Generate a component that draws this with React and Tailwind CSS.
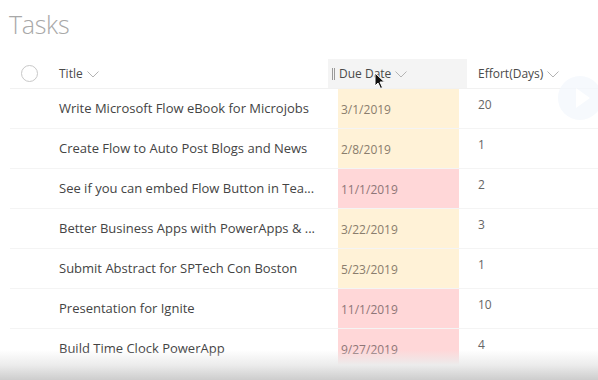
import React from 'react';

const tasks = [
  { title: 'Write Microsoft Flow eBook for Microjobs', due: '3/1/2019', effort: '20', late: false },
  { title: 'Create Flow to Auto Post Blogs and News', due: '2/8/2019', effort: '1', late: false },
  { title: 'See if you can embed Flow Button in Tea...', due: '11/1/2019', effort: '2', late: true },
  { title: 'Better Business Apps with PowerApps & ...', due: '3/22/2019', effort: '3', late: false },
  { title: 'Submit Abstract for SPTech Con Boston', due: '5/23/2019', effort: '1', late: false },
  { title: 'Presentation for Ignite', due: '11/1/2019', effort: '10', late: true },
  { title: 'Build Time Clock PowerApp', due: '9/27/2019', effort: '4', late: true },
];

function Chevron() {
  return (
    <svg width="12" height="7" viewBox="0 0 12 7" className="ml-[4px] mt-[1px]">
      <path d="M0.5 0.5 L6 6 L11.5 0.5" fill="none" stroke="#b4b4b4" strokeWidth="1" />
    </svg>
  );
}

export default function App() {
  return (
    <div
      className="relative w-[598px] h-[380px] overflow-hidden bg-white"
      style={{ fontFamily: '"Open Sans", "Noto Sans", sans-serif' }}
    >
      <h1 className="pl-[9px] pt-[8px] h-[59px] text-[25px] font-light text-[#a8a8a8] leading-[32px] tracking-[-0.3px]">
        Tasks
      </h1>

      <div className="flex h-[30px] items-center border-b border-[#f1f1f1] ml-[10px] text-[12px] text-[#4a4a4a]">
        <div className="w-[49px] flex items-center pl-[11px]">
          <div className="w-[17px] h-[17px] rounded-full border border-[#c8c8c8]" />
        </div>
        <div className="w-[269px] flex items-center">
          Title
          <Chevron />
        </div>
        <div className="w-[139px] h-full bg-[#f4f4f4] flex items-center pl-[4px]">
          <div className="w-[3px] h-[12px] border-l border-r border-[#9a9a9a] mr-[4px]" />
          Due Date
          <Chevron />
        </div>
        <div className="flex items-center pl-[11px]">
          Effort(Days)
          <Chevron />
        </div>
      </div>

      {tasks.map((t) => (
        <div key={t.title} className="flex h-[40px] border-b border-[#f4f4f4] ml-[10px] text-[13px]">
          <div className="w-[49px]" />
          <div className="w-[269px] flex items-center text-[#444444] whitespace-nowrap">
            {t.title}
          </div>
          <div className="w-[150px] h-full pl-[10px]">
            <div
              className={`w-[121px] h-full flex items-center pl-[3px] pt-[2px] text-[12px] ${
                t.late ? 'bg-[#ffd7d8] text-[#8e7677]' : 'bg-[#fff2d7] text-[#8a7d6d]'
              }`}
            >
              {t.due}
            </div>
          </div>
          <div className="flex items-center pb-[8px] text-[12px] text-[#666666]">{t.effort}</div>
        </div>
      ))}

      <div className="absolute left-[558px] top-[76px] w-[44px] h-[44px] rounded-full bg-[#f4f8fd] opacity-80">
        <svg width="44" height="44" viewBox="0 0 44 44">
          <path d="M18 12 L32 22 L18 32 Z" fill="#ffffff" />
        </svg>
      </div>

      <svg className="absolute left-[374px] top-[72px]" width="12" height="18" viewBox="0 0 12 18">
        <path d="M1 1 L1 14 L4 11 L6.5 16.5 L8.5 15.5 L6 10 L10.5 10 Z" fill="#111" stroke="#fff" strokeWidth="1" />
      </svg>

      <div className="absolute left-0 right-0 bottom-0 h-[30px] bg-gradient-to-b from-transparent via-[#ececec] to-[#cdcdcd]" />
    </div>
  );
}
